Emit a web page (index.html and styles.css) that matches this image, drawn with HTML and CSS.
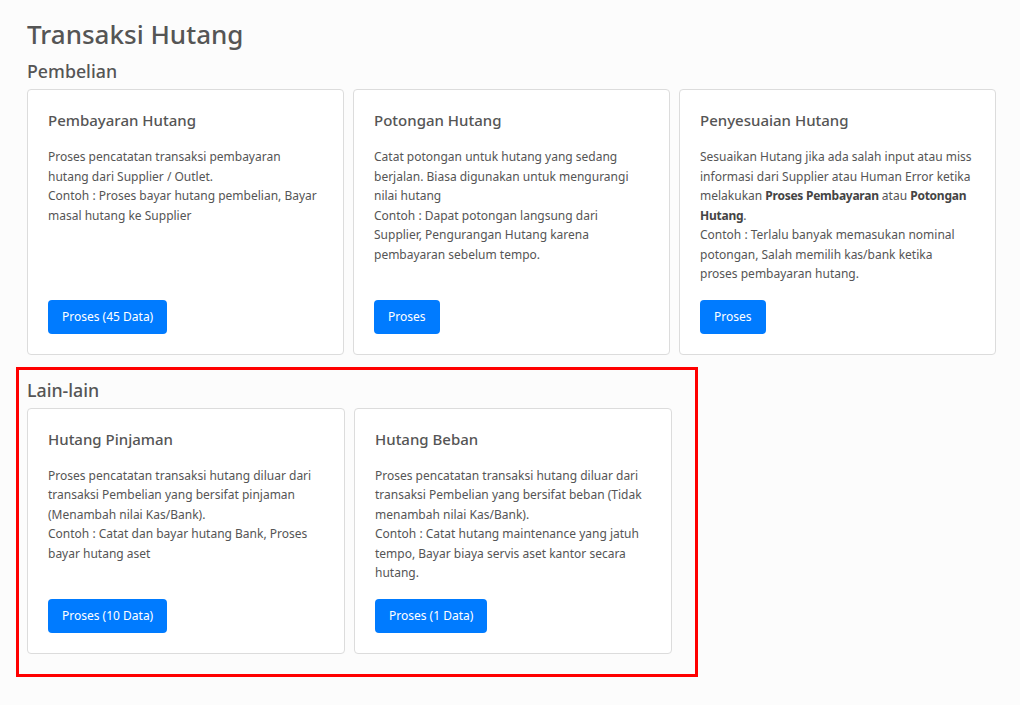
FILE: index.html
```html
<!DOCTYPE html>
<html lang="id">
<head>
    <meta charset="UTF-8">
    <meta name="viewport" content="width=device-width, initial-scale=1.0">
    <title>Transaksi Hutang</title>
    <link rel="stylesheet" href="styles.css">
</head>
<body>
    <div class="page">
        <h1 class="page-title">Transaksi Hutang</h1>

        <section class="group">
            <h2 class="group-title">Pembelian</h2>
            <div class="card-grid">
                <div class="card">
                    <h3 class="card-title">Pembayaran Hutang</h3>
                    <p class="card-text">
                        Proses pencatatan transaksi pembayaran hutang dari Supplier / Outlet.<br>
                        Contoh : Proses bayar hutang pembelian, Bayar masal hutang ke Supplier
                    </p>
                    <button class="btn-primary">Proses (45 Data)</button>
                </div>

                <div class="card">
                    <h3 class="card-title">Potongan Hutang</h3>
                    <p class="card-text">
                        Catat potongan untuk hutang yang sedang berjalan. Biasa digunakan untuk mengurangi nilai hutang<br>
                        Contoh : Dapat potongan langsung dari Supplier, Pengurangan Hutang karena pembayaran sebelum tempo.
                    </p>
                    <button class="btn-primary">Proses</button>
                </div>

                <div class="card">
                    <h3 class="card-title">Penyesuaian Hutang</h3>
                    <p class="card-text">
                        Sesuaikan Hutang jika ada salah input atau miss informasi dari Supplier atau Human Error ketika melakukan <strong>Proses Pembayaran</strong> atau <strong>Potongan Hutang</strong>.<br>
                        Contoh : Terlalu banyak memasukan nominal potongan, Salah memilih kas/bank ketika proses pembayaran hutang.
                    </p>
                    <button class="btn-primary">Proses</button>
                </div>
            </div>
        </section>

        <section class="group group-marked">
            <h2 class="group-title">Lain-lain</h2>
            <div class="card-grid card-grid-two">
                <div class="card">
                    <h3 class="card-title">Hutang Pinjaman</h3>
                    <p class="card-text">
                        Proses pencatatan transaksi hutang diluar dari transaksi Pembelian yang bersifat pinjaman (Menambah nilai Kas/Bank).<br>
                        Contoh : Catat dan bayar hutang Bank, Proses bayar hutang aset
                    </p>
                    <button class="btn-primary">Proses (10 Data)</button>
                </div>

                <div class="card">
                    <h3 class="card-title">Hutang Beban</h3>
                    <p class="card-text">
                        Proses pencatatan transaksi hutang diluar dari transaksi Pembelian yang bersifat beban (Tidak menambah nilai Kas/Bank).<br>
                        Contoh : Catat hutang maintenance yang jatuh tempo, Bayar biaya servis aset kantor secara hutang.
                    </p>
                    <button class="btn-primary">Proses (1 Data)</button>
                </div>
            </div>
        </section>
    </div>
</body>
</html>
```

FILE: styles.css
```css
body {
    margin: 0;
    background: #fcfcfc;
    color: #555;
    font-family: "Noto Sans", "Open Sans", sans-serif;
}

.page {
    padding: 16px 24px 0 27px;
}

.page-title {
    margin: 0 0 7px;
    font-size: 26px;
    font-weight: 500;
    line-height: 36px;
    color: #555;
}

.group {
    margin-bottom: 12px;
}

.group-title {
    margin: 0 0 6px;
    font-size: 17.8px;
    font-weight: 500;
    line-height: 24px;
    color: #555;
}

.card-grid {
    display: grid;
    grid-template-columns: repeat(3, 317px);
    gap: 9px;
}

.card-grid-two {
    grid-template-columns: repeat(2, 318px);
}

.group-marked {
    width: fit-content;
    margin-left: -11px;
    padding: 8px 23px 20px 8px;
    border: 3px solid #ff0000;
}

.card {
    display: flex;
    flex-direction: column;
    align-items: flex-start;
    padding: 20px;
    background: #fff;
    border: 1px solid #dcdcdc;
    border-radius: 4px;
}

.card-title {
    margin: 0 0 16px;
    font-size: 15px;
    font-weight: 500;
    line-height: 21px;
    color: #555;
}

.card-text {
    margin: 0 0 16px;
    padding-right: 3px;
    font-size: 12px;
    line-height: 19.5px;
}

.card-text strong {
    font-weight: 700;
    letter-spacing: -0.25px;
    color: #444;
}

.btn-primary {
    margin-top: auto;
    padding: 0 14px;
    height: 34px;
    background: #007bff;
    color: #fff;
    border: 0;
    border-radius: 4px;
    font-family: inherit;
    font-size: 12px;
    cursor: pointer;
}
```
